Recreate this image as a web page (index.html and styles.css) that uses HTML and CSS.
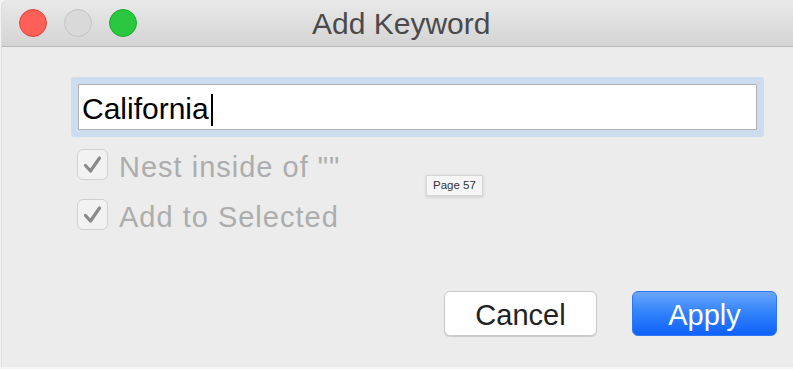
FILE: index.html
```html
<!DOCTYPE html>
<html>
<head>
<meta charset="utf-8">
<link rel="stylesheet" href="styles.css">
</head>
<body>
<div class="window">
  <div class="titlebar">
    <div class="lights">
      <span class="light red"></span>
      <span class="light gray"></span>
      <span class="light green"></span>
    </div>
    <div class="title">Add Keyword</div>
  </div>
  <div class="content">
    <div class="field"><span class="value">California</span><span class="caret"></span></div>
    <div class="checks">
      <label class="check">
        <span class="box"><svg viewBox="0 0 31 31" width="31" height="31"><path d="M8.5 16.5 L13.5 22 L22.5 9" fill="none" stroke="#8a8a8a" stroke-width="3.2" stroke-linecap="round" stroke-linejoin="round"/></svg></span>
        <span class="label">Nest inside of ""</span>
      </label>
      <label class="check">
        <span class="box"><svg viewBox="0 0 31 31" width="31" height="31"><path d="M8.5 16.5 L13.5 22 L22.5 9" fill="none" stroke="#8a8a8a" stroke-width="3.2" stroke-linecap="round" stroke-linejoin="round"/></svg></span>
        <span class="label">Add to Selected</span>
      </label>
    </div>
    <div class="buttons">
      <button class="btn cancel">Cancel</button>
      <button class="btn apply">Apply</button>
    </div>
    <div class="tooltip">Page 57</div>
  </div>
</div>
</body>
</html>
```
FILE: styles.css
```css
html, body {
  margin: 0;
  padding: 0;
}
body {
  width: 793px;
  height: 369px;
  overflow: hidden;
  background: #f4f4f4;
  font-family: "Liberation Sans", Arial, sans-serif;
}
.window {
  position: relative;
  width: 791px;
  height: 367px;
  margin-left: 2px;
  background: #ececec;
  border-top-left-radius: 6px;
  display: flex;
  flex-direction: column;
  box-shadow: -1px 0 0 #dcdcdc;
}
.titlebar {
  height: 46px;
  border-bottom: 1px solid #b9b9b9;
  background: linear-gradient(#e9e9e9, #d4d4d4);
  border-top-left-radius: 6px;
  display: flex;
  align-items: center;
  padding-left: 17px;
}
.lights {
  display: flex;
  gap: 17px;
}
.light {
  width: 28px;
  height: 28px;
  border-radius: 50%;
  box-sizing: border-box;
}
.red {
  background: #fe5f57;
  border: 1px solid #e2463f;
}
.gray {
  background: #d9d9d9;
  border: 1px solid #c4c4c4;
}
.green {
  background: #29c840;
  border: 1px solid #1aac2c;
}
.title {
  margin-left: 175px;
  font-size: 30px;
  color: #4a4a4a;
  line-height: 46px;
  padding-top: 1px;
}
.content {
  position: relative;
  flex: 1;
  display: flex;
  flex-direction: column;
  padding: 37px 0 0 76px;
}
.field {
  width: 679px;
  height: 46px;
  box-sizing: border-box;
  background: #fff;
  border: 1px solid #b3b3b3;
  box-shadow: 0 0 0 7px #cedcef;
  border-radius: 1px;
  display: flex;
  align-items: center;
  padding-left: 3px;
  padding-top: 4px;
  font-size: 30px;
  color: #000;
}
.caret {
  width: 2px;
  height: 32px;
  background: #000;
  margin-left: 2px;
  margin-top: 1px;
}
.checks {
  display: flex;
  flex-direction: column;
  gap: 19px;
  margin-top: 19px;
  margin-left: -1px;
}
.check {
  display: flex;
  align-items: center;
  height: 31px;
}
.box {
  width: 31px;
  height: 31px;
  box-sizing: border-box;
  border: 1px solid #d0d0d0;
  border-radius: 6px;
  background: #f2f2f2;
  display: flex;
  align-items: center;
  justify-content: center;
}
.box svg {
  display: block;
  flex: none;
}
.label {
  margin-left: 11px;
  font-size: 29px;
  letter-spacing: 1px;
  color: #adadad;
  line-height: 31px;
  padding-top: 5px;
}
.buttons {
  display: flex;
  gap: 35px;
  margin-top: 61px;
  margin-left: 366px;
}
.btn {
  height: 45px;
  box-sizing: border-box;
  font-family: "Liberation Sans", Arial, sans-serif;
  font-size: 29px;
  border-radius: 6px;
  padding: 0;
  padding-top: 4px;
}
.cancel {
  width: 153px;
  background: #fff;
  border: 1px solid #c9c9c9;
  box-shadow: 0 1px 1px rgba(0,0,0,0.15);
  color: #222;
}
.apply {
  width: 145px;
  border: 1px solid #2a78f3;
  background: linear-gradient(#6aa6fb, #3484fb 45%, #0f62fb);
  color: #fff;
}
.tooltip {
  position: absolute;
  left: 424px;
  top: 128px;
  height: 21px;
  padding: 0 6px;
  box-sizing: border-box;
  background: #f6f6f6;
  border: 1px solid #d6d6d6;
  box-shadow: 0 1px 3px rgba(0,0,0,0.15);
  font-size: 11.5px;
  line-height: 19px;
  color: #333;
}
```
